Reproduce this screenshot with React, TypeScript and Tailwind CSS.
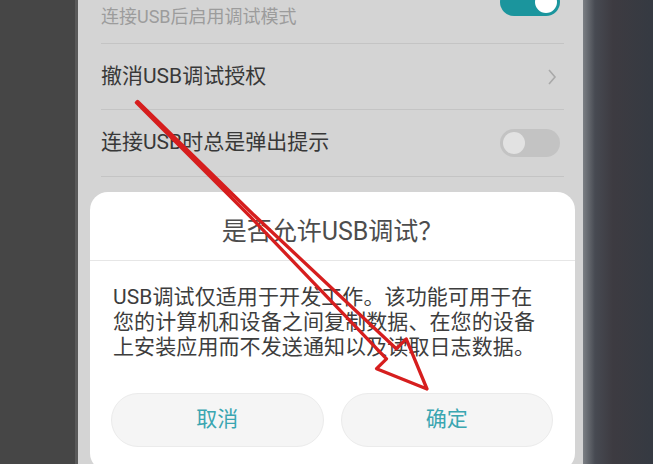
import React from 'react';

const cjk = { fontFamily: 'Roboto, "Noto Sans CJK SC", sans-serif' };

function Toggle({ on }: { on: boolean }) {
  return (
    <div
      className={`relative w-[60px] h-[28px] rounded-full shrink-0 ${
        on ? 'bg-[#1b959d]' : 'bg-[#c3c3c3]'
      }`}
    >
      <div
        className={`absolute top-[3px] w-[22px] h-[22px] rounded-full ${
          on ? 'right-[3px] bg-white' : 'left-[3px] bg-[#e2e2e2]'
        }`}
      />
    </div>
  );
}

function Chevron() {
  return (
    <svg width="10" height="18" viewBox="0 0 10 18" className="shrink-0">
      <path d="M2 2 L8 9 L2 16" fill="none" stroke="#a9a9a9" strokeWidth="1.6" />
    </svg>
  );
}

// hollow red arrow pointing at the confirm button; shaft tapers toward the tail
function Arrow() {
  const pts = [
    [136.4, 102.6],
    [250.2, 216.6],
    [386.5, 358.8],
    [376.6, 368.7],
    [427, 389],
    [406.2, 338.9],
    [396.3, 348.8],
    [252.8, 214.0],
    [137.6, 101.4],
  ]
    .map((p) => p.join(','))
    .join(' ');
  return (
    <svg
      className="absolute inset-0 pointer-events-none"
      width="653"
      height="464"
      viewBox="0 0 653 464"
    >
      <polygon
        points={pts}
        fill="none"
        stroke="#d61e1e"
        strokeWidth="3.3"
        strokeLinejoin="round"
      />
    </svg>
  );
}

export default function App() {
  return (
    <div className="relative flex w-[653px] h-[464px] overflow-hidden" style={cjk}>
      <div className="w-[78px] h-full bg-[#464646] border-r-[3px] border-[#5a5a5a]" />

      <div className="w-[505px] h-full bg-[#d4d4d4] overflow-hidden">
        <div className="ml-[23px] mr-[19px] -mt-[40px]">
          <div className="h-[84px] flex items-center justify-between border-b border-[#c4c4c4] pr-[4px]">
            <div className="flex flex-col gap-[4px]">
              <span className="text-[21px] leading-[26px] text-[#3a3a3a]">USB调试</span>
              <span className="text-[18px] leading-[24px] text-[#9c9c9c]">连接USB后启用调试模式</span>
            </div>
            <Toggle on />
          </div>
          <div className="h-[66px] flex items-center justify-between border-b border-[#c4c4c4] pr-[7px]">
            <span className="text-[21px] text-[#383838]">撤消USB调试授权</span>
            <Chevron />
          </div>
          <div className="h-[67px] flex items-center justify-between border-b border-[#c4c4c4] pr-[4px]">
            <span className="text-[21px] text-[#383838]">连接USB时总是弹出提示</span>
            <Toggle on={false} />
          </div>
        </div>

        <div className="ml-[12px] mt-[15px] w-[485px] bg-white rounded-[18px]">
          <div className="h-[69px] pt-[25px] text-center text-[25px] leading-[29px] text-[#4d4d4d] border-b border-[#e6e6e6]">
            是否允许USB调试？
          </div>
          <div className="px-[23px] pt-[24px] text-[21px] leading-[25px] tracking-[0.1px] text-[#3d3d3d] whitespace-nowrap">
            <div>USB调试仅适用于开发工作。该功能可用于在</div>
            <div>您的计算机和设备之间复制数据、在您的设备</div>
            <div>上安装应用而不发送通知以及读取日志数据。</div>
          </div>
          <div className="flex gap-[17px] pl-[21px] pr-[22px] pt-[33px] pb-[24px]">
            <button className="flex-1 h-[54px] rounded-full bg-[#f5f5f5] border border-[#ebebeb] text-[21px] text-[#3aa6b1]">
              取消
            </button>
            <button className="flex-1 h-[54px] rounded-full bg-[#f5f5f5] border border-[#ebebeb] text-[21px] text-[#3aa6b1]">
              确定
            </button>
          </div>
        </div>
      </div>

      <div className="flex-1 h-full bg-[linear-gradient(to_right,#7b7f84_0px,#474a52_12px,#3d3b41_30px,#353a42)]" />

      <Arrow />
    </div>
  );
}
